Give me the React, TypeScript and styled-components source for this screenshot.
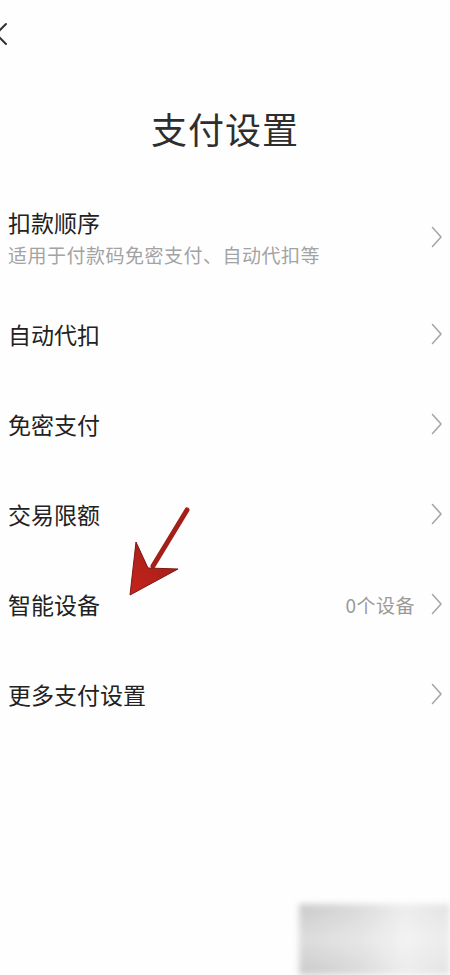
import React from "react";
import styled, { createGlobalStyle } from "styled-components";

const GlobalStyle = createGlobalStyle`
  html, body {
    margin: 0;
    padding: 0;
    background: #fefefe;
  }
  body {
    font-family: "Noto Sans CJK SC", "Noto Sans", sans-serif;
    color: #222;
  }
`;

type Item = { title: string; sub?: string; value?: string };

const items: Item[] = [
  { title: "扣款顺序", sub: "适用于付款码免密支付、自动代扣等" },
  { title: "自动代扣" },
  { title: "免密支付" },
  { title: "交易限额" },
  { title: "智能设备", value: "0个设备" },
  { title: "更多支付设置" },
];

const Chevron = () => (
  <ChevronSvg viewBox="0 0 12 22" width="12" height="22">
    <path d="M1.5 1.5 L10 11 L1.5 20.5" fill="none" stroke="#a6a6a6" strokeWidth="1.6" strokeLinecap="round" strokeLinejoin="round" />
  </ChevronSvg>
);

const App: React.FC = () => {
  return (
    <Page>
      <GlobalStyle />
      <TopBar>
        <BackButton aria-label="返回">
          <svg viewBox="0 0 14 24" width="14" height="24">
            <path d="M12 2 L2 12 L12 22" fill="none" stroke="#333" strokeWidth="2" strokeLinecap="round" strokeLinejoin="round" />
          </svg>
        </BackButton>
      </TopBar>
      <Title>支付设置</Title>
      <List>
        {items.map((it) => (
          <Row key={it.title} tall={!!it.sub}>
            <TextCol>
              <RowTitle>{it.title}</RowTitle>
              {it.sub && <RowSub>{it.sub}</RowSub>}
            </TextCol>
            <RightCol>
              {it.value && <RowValue>{it.value}</RowValue>}
              <Chevron />
            </RightCol>
          </Row>
        ))}
      </List>
      <Arrow viewBox="0 0 80 110" width="80" height="110">
        <defs>
          <linearGradient id="ag" x1="0" y1="1" x2="1" y2="0">
            <stop offset="0" stopColor="#c6241c" />
            <stop offset="1" stopColor="#9c1d18" />
          </linearGradient>
        </defs>
        <line x1="60" y1="16" x2="26" y2="72" stroke="#a51f1a" strokeWidth="5" strokeLinecap="round" />
        <polygon points="3,101 9,48 21,74 51,75" fill="url(#ag)" stroke="#7d1713" strokeWidth="1" strokeLinejoin="round" />
      </Arrow>
      <Watermark />
    </Page>
  );
};

const Page = styled.div`
  position: relative;
  width: 450px;
  height: 975px;
  overflow: hidden;
  background: #fefefe;
`;

const TopBar = styled.div`
  height: 70px;
  display: flex;
  align-items: flex-start;
  padding-top: 22px;
  box-sizing: border-box;
`;

const BackButton = styled.button`
  border: none;
  background: none;
  padding: 0;
  margin-left: -6px;
  height: 24px;
  display: flex;
  align-items: center;
  cursor: pointer;
`;

const Title = styled.h1`
  margin: 0;
  padding-top: 34px;
  height: 82px;
  box-sizing: border-box;
  text-align: center;
  font-size: 36px;
  line-height: 48px;
  font-weight: 400;
  color: #2e2e2e;
  letter-spacing: 1px;
`;

const List = styled.div`
  display: flex;
  flex-direction: column;
  margin-top: 33px;
`;

const Row = styled.div<{ tall?: boolean }>`
  height: ${(p) => (p.tall ? 104 : 90)}px;
  display: flex;
  align-items: center;
  justify-content: space-between;
  padding: 0 7px 0 8px;
`;

const TextCol = styled.div`
  display: flex;
  flex-direction: column;
  gap: 6px;
`;

const RowTitle = styled.div`
  font-size: 23px;
  line-height: 30px;
  color: #222;
`;

const RowSub = styled.div`
  font-size: 19px;
  line-height: 24px;
  color: #a3a3a3;
  letter-spacing: 0.5px;
`;

const RightCol = styled.div`
  display: flex;
  align-items: center;
  gap: 16px;
`;

const RowValue = styled.span`
  font-size: 19px;
  color: #9a9a9a;
  letter-spacing: 0.5px;
`;

const ChevronSvg = styled.svg`
  display: block;
`;

const Arrow = styled.svg`
  position: absolute;
  left: 127px;
  top: 494px;
`;

const Watermark = styled.div`
  position: absolute;
  left: 299px;
  top: 904px;
  width: 151px;
  height: 71px;
  background:
    linear-gradient(180deg, rgba(255, 255, 255, 0) 0%, rgba(255, 255, 255, 0.35) 50%, rgba(255, 255, 255, 0) 100%),
    linear-gradient(90deg, #c4c4c4 0%, #d6d6d6 40%, #ebebeb 70%, #e0e0e0 100%);
  filter: blur(3px);
  opacity: 0.9;
`;

export default App;
